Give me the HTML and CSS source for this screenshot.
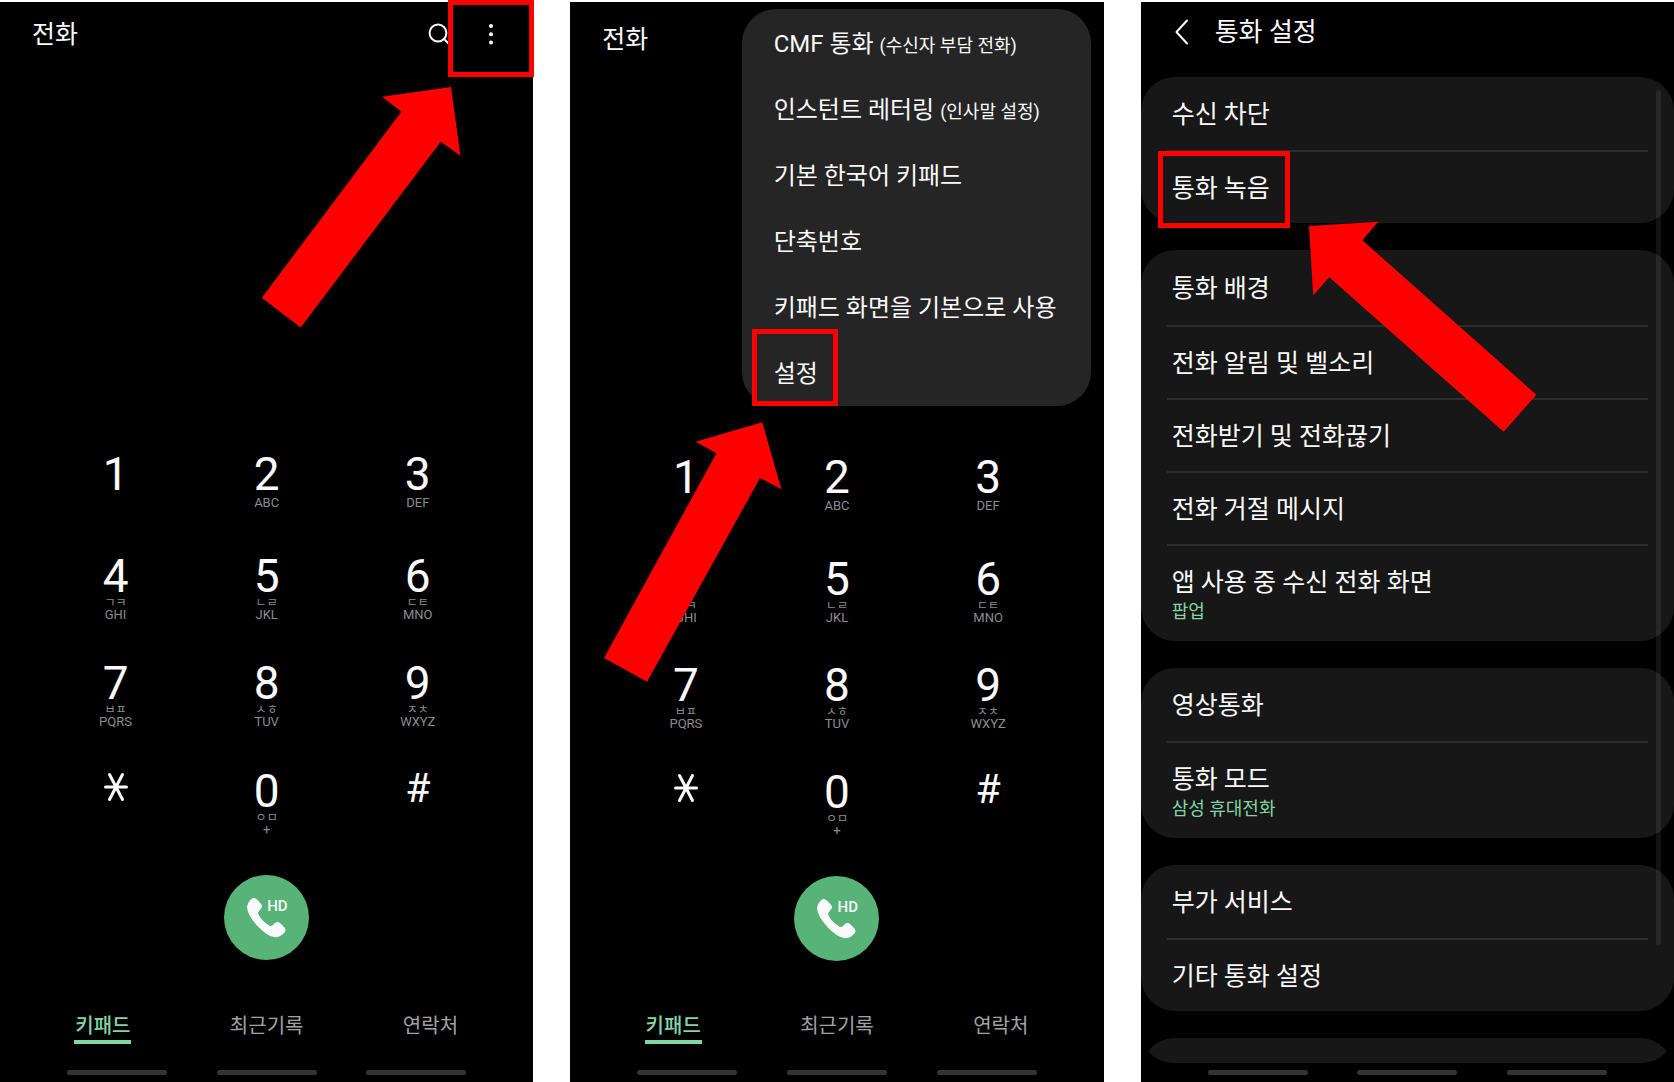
FILE: index.html
```
<!DOCTYPE html>
<html lang="ko">
<head>
    <meta charset="UTF-8">
    <meta name="viewport" content="width=device-width, initial-scale=1.0">
    <title>통화 녹음 설정 방법</title>
    <link rel="stylesheet" href="styles.css">
</head>
<body>
<main class="screens">

    <!-- 1. 전화 앱 키패드 -->
    <section class="phone">
        <header class="phone-header">
            <h1 class="phone-title">전화</h1>
            <div class="header-actions">
                <button class="icon-btn" aria-label="검색">
                    <svg width="24" height="24" viewBox="0 0 24 24"><circle cx="11" cy="10" r="8.4"/><path d="M17 16l5 5"/></svg>
                </button>
                <button class="icon-btn" aria-label="더보기">
                    <svg class="dots" width="24" height="24" viewBox="0 0 24 24"><circle cx="12" cy="3" r="2"/><circle cx="12" cy="11.2" r="2"/><circle cx="12" cy="19.4" r="2"/></svg>
                </button>
            </div>
        </header>

        <div class="keypad">
            <button class="key"><span class="digit">1</span></button>
            <button class="key"><span class="digit">2</span><span class="latin">ABC</span></button>
            <button class="key"><span class="digit">3</span><span class="latin">DEF</span></button>
            <button class="key"><span class="digit">4</span><span class="jamo">ㄱㅋ</span><span class="latin">GHI</span></button>
            <button class="key"><span class="digit">5</span><span class="jamo">ㄴㄹ</span><span class="latin">JKL</span></button>
            <button class="key"><span class="digit">6</span><span class="jamo">ㄷㅌ</span><span class="latin">MNO</span></button>
            <button class="key"><span class="digit">7</span><span class="jamo">ㅂㅍ</span><span class="latin">PQRS</span></button>
            <button class="key"><span class="digit">8</span><span class="jamo">ㅅㅎ</span><span class="latin">TUV</span></button>
            <button class="key"><span class="digit">9</span><span class="jamo">ㅈㅊ</span><span class="latin">WXYZ</span></button>
            <button class="key" aria-label="별표"><svg class="star" width="24" height="30" viewBox="0 0 24 30"><path d="M1.5 15h21M5.5 2.5l13 25M18.5 2.5l-13 25"/></svg></button>
            <button class="key"><span class="digit">0</span><span class="jamo">ㅇㅁ</span><span class="latin">+</span></button>
            <button class="key"><span class="symbol">#</span></button>
        </div>

        <button class="call-btn" aria-label="HD 통화">
            <svg width="85" height="85" viewBox="0 0 85 85"><path d="M28.5 23.2Q31 22 34 25.5L37 29Q39 31 37 33.5Q34 36.5 34 38Q37 46 46 51Q48 51.5 50.5 48.5Q53.5 46 56 48L60.5 52.5Q62.5 55 60.5 57.5Q56 62.5 51 62.3Q43 61.5 33 50.5Q23.5 40 23 32Q24 26 28.5 23.2Z"/></svg>
            <span class="hd">HD</span>
        </button>

        <nav class="tabs">
            <button class="tab active">키패드</button>
            <button class="tab">최근기록</button>
            <button class="tab">연락처</button>
        </nav>
        <div class="gesture-bar"><i></i><i></i><i></i></div>

        <span class="highlight highlight-more"></span>
        <svg class="arrow arrow-more" width="200" height="242" viewBox="0 0 200 242"><path d="M190 1L199.4 69.7L179.7 55.7L39.7 241.5L.8 211.8L140.4 25.7L121.1 10.7Z"/></svg>
    </section>

    <!-- 2. 더보기 메뉴 -->
    <section class="phone phone-menu">
        <header class="phone-header">
            <h1 class="phone-title">전화</h1>
        </header>

        <div class="keypad">
            <button class="key"><span class="digit">1</span></button>
            <button class="key"><span class="digit">2</span><span class="latin">ABC</span></button>
            <button class="key"><span class="digit">3</span><span class="latin">DEF</span></button>
            <button class="key"><span class="digit">4</span><span class="jamo">ㄱㅋ</span><span class="latin">GHI</span></button>
            <button class="key"><span class="digit">5</span><span class="jamo">ㄴㄹ</span><span class="latin">JKL</span></button>
            <button class="key"><span class="digit">6</span><span class="jamo">ㄷㅌ</span><span class="latin">MNO</span></button>
            <button class="key"><span class="digit">7</span><span class="jamo">ㅂㅍ</span><span class="latin">PQRS</span></button>
            <button class="key"><span class="digit">8</span><span class="jamo">ㅅㅎ</span><span class="latin">TUV</span></button>
            <button class="key"><span class="digit">9</span><span class="jamo">ㅈㅊ</span><span class="latin">WXYZ</span></button>
            <button class="key" aria-label="별표"><svg class="star" width="24" height="30" viewBox="0 0 24 30"><path d="M1.5 15h21M5.5 2.5l13 25M18.5 2.5l-13 25"/></svg></button>
            <button class="key"><span class="digit">0</span><span class="jamo">ㅇㅁ</span><span class="latin">+</span></button>
            <button class="key"><span class="symbol">#</span></button>
        </div>

        <button class="call-btn" aria-label="HD 통화">
            <svg width="85" height="85" viewBox="0 0 85 85"><path d="M28.5 23.2Q31 22 34 25.5L37 29Q39 31 37 33.5Q34 36.5 34 38Q37 46 46 51Q48 51.5 50.5 48.5Q53.5 46 56 48L60.5 52.5Q62.5 55 60.5 57.5Q56 62.5 51 62.3Q43 61.5 33 50.5Q23.5 40 23 32Q24 26 28.5 23.2Z"/></svg>
            <span class="hd">HD</span>
        </button>

        <nav class="tabs">
            <button class="tab active">키패드</button>
            <button class="tab">최근기록</button>
            <button class="tab">연락처</button>
        </nav>
        <div class="gesture-bar"><i></i><i></i><i></i></div>

        <div class="popup">
            <button class="popup-item">CMF 통화 <small>(수신자 부담 전화)</small></button>
            <button class="popup-item">인스턴트 레터링 <small>(인사말 설정)</small></button>
            <button class="popup-item">기본 한국어 키패드</button>
            <button class="popup-item">단축번호</button>
            <button class="popup-item">키패드 화면을 기본으로 사용</button>
            <button class="popup-item">설정</button>
        </div>

        <span class="highlight highlight-settings"></span>
        <svg class="arrow arrow-settings" width="180" height="262" viewBox="0 0 180 262"><path d="M159.2 1.3L178.4 68.3L157 57L44.1 260.7L1 237L113.4 32.3L92.7 20.7Z"/></svg>
    </section>

    <!-- 3. 통화 설정 -->
    <section class="phone">
        <header class="phone-header settings-header">
            <button class="icon-btn" aria-label="뒤로">
                <svg width="14" height="26" viewBox="0 0 14 26"><path d="M12 1.5L1.5 13L12 24.5"/></svg>
            </button>
            <h1 class="phone-title">통화 설정</h1>
        </header>

        <div class="settings">
            <div class="card">
                <button class="row">수신 차단</button>
                <button class="row">통화 녹음</button>
            </div>
            <div class="card card-call">
                <button class="row">통화 배경</button>
                <button class="row">전화 알림 및 벨소리</button>
                <button class="row">전화받기 및 전화끊기</button>
                <button class="row">전화 거절 메시지</button>
                <button class="row row-double">앱 사용 중 수신 전화 화면<span class="value">팝업</span></button>
            </div>
            <div class="card">
                <button class="row">영상통화</button>
                <button class="row row-double">통화 모드<span class="value">삼성 휴대전화</span></button>
            </div>
            <div class="card">
                <button class="row">부가 서비스</button>
                <button class="row">기타 통화 설정</button>
            </div>
            <div class="card card-cut"></div>
            <span class="scrollbar"></span>
        </div>
        <div class="gesture-bar"><i></i><i></i><i></i></div>

        <span class="highlight highlight-record"></span>
        <svg class="arrow arrow-record" width="230" height="212" viewBox="0 0 230 212"><path d="M1 5L70.2 .7L54.4 19.3L228.4 173.7L195.6 210.7L21.3 56.3L5.2 74.3Z"/></svg>
    </section>

</main>
</body>
</html>
```

FILE: styles.css
```
:root {
    --green: #83d5a8;
    --call: #57b377;
    --card: #171717;
    --popup: #252525;
    --line: #2d2d2d;
    --muted: #8c8c8c;
    --mark: #ff0000;
}

* {
    box-sizing: border-box;
}

body {
    margin: 0;
    background: #fff;
    color: #fafafa;
    font-family: Roboto, "Noto Sans CJK KR", sans-serif;
}

button {
    margin: 0;
    padding: 0;
    border: 0;
    background: none;
    color: inherit;
    font: inherit;
    cursor: pointer;
}

.screens {
    display: grid;
    grid-template-columns: repeat(3, 1fr);
    gap: 37px;
    min-height: 100vh;
    padding-top: 2px;
}

.phone {
    position: relative;
    display: flex;
    flex-direction: column;
    padding-bottom: 7px;
    background: #000;
}

/* 상단 */
.phone-header {
    display: flex;
    align-items: center;
    justify-content: space-between;
    height: 65px;
    padding: 0 30px 0 32px;
}

.phone-title {
    margin: 0;
    font-size: 25px;
    font-weight: 400;
    line-height: 30px;
}

.header-actions {
    display: flex;
    gap: 28px;
}

.icon-btn {
    display: flex;
}

.icon-btn svg {
    fill: none;
    stroke: #fafafa;
    stroke-width: 2;
    stroke-linecap: round;
    stroke-linejoin: round;
}

.icon-btn .dots {
    fill: #fafafa;
    stroke: none;
}

.phone-menu .phone-header {
    height: 76px;
}

/* 키패드 */
.keypad {
    display: grid;
    grid-template-columns: repeat(3, 1fr);
    grid-template-rows: 102px 107px 108px 106px;
    margin-top: auto;
    padding: 0 40px;
}

.phone-menu .keypad {
    grid-template-rows: 102px 106px 107px 106px;
}

.key {
    display: flex;
    flex-direction: column;
    align-items: center;
    justify-content: flex-start;
}

.digit {
    font-size: 46px;
    line-height: 44px;
}

.symbol {
    font-size: 41px;
    line-height: 38px;
}

.star {
    margin-top: 3px;
    fill: none;
    stroke: #fafafa;
    stroke-width: 3;
    stroke-linecap: round;
}

.jamo {
    color: var(--muted);
    font-size: 12px;
    line-height: 10px;
}

.latin {
    color: var(--muted);
    font-size: 13px;
    line-height: 14px;
}

.call-btn {
    position: relative;
    align-self: center;
    width: 85px;
    height: 85px;
    border-radius: 50%;
    background: var(--call);
}

.call-btn svg {
    display: block;
    fill: #fafafa;
}

.hd {
    position: absolute;
    top: 22px;
    left: 43px;
    font-size: 15px;
    font-weight: 500;
    line-height: 18px;
}

/* 하단 탭 */
.tabs {
    display: grid;
    grid-template-columns: repeat(3, 1fr);
    justify-items: center;
    margin-top: 53px;
    padding: 0 21px;
}

.phone-menu .tabs {
    margin-top: 52px;
}

.tab {
    padding: 0 1px 1px;
    border-bottom: 4px solid transparent;
    color: #a3a3a3;
    font-size: 20px;
    line-height: 26px;
}

.tab.active {
    border-color: var(--green);
    color: var(--green);
    font-weight: 500;
}

.gesture-bar {
    display: grid;
    grid-template-columns: repeat(3, 1fr);
    justify-items: center;
    margin-top: 26px;
    padding: 0 42px;
}

.gesture-bar i {
    width: 100px;
    height: 5px;
    border-radius: 3px;
    background: #333;
}

/* 더보기 메뉴 */
.popup {
    position: absolute;
    top: 7px;
    right: 13px;
    width: 349px;
    height: 397px;
    padding-top: 2px;
    border-radius: 34px;
    background: var(--popup);
}

.popup-item {
    display: block;
    width: 100%;
    height: 66px;
    padding: 0 32px;
    font-size: 24px;
    line-height: 66px;
    text-align: left;
    white-space: nowrap;
}

.popup-item small {
    font-size: 18px;
}

/* 통화 설정 */
.settings-header {
    justify-content: flex-start;
    gap: 26px;
    height: 75px;
    padding: 0 34px 16px;
}

.settings-header .phone-title {
    font-size: 26px;
}

.settings {
    position: relative;
    display: flex;
    flex-direction: column;
    gap: 27px;
    overflow: hidden;
    border-radius: 0 0 32px 32px;
}

.settings + .gesture-bar {
    margin-top: auto;
}

.card {
    padding: 0 26px;
    border-radius: 34px;
    background: var(--card);
}

/* 목록 아래쪽에서 잘리는 카드 */
.card-cut {
    height: 68px;
    margin-bottom: -43px;
}

.row {
    display: block;
    width: 100%;
    height: 73px;
    padding: 2px 5px 0;
    font-size: 25px;
    line-height: 30px;
    text-align: left;
}

.row + .row {
    border-top: 2px solid var(--line);
}

.card-call .row:first-child {
    height: 75px;
}

.row-double {
    height: 97px;
}

.value {
    display: block;
    margin-top: 4px;
    color: var(--green);
    font-size: 18px;
    line-height: 20px;
}

.scrollbar {
    position: absolute;
    top: 13px;
    right: 13px;
    width: 5px;
    height: 855px;
    border-radius: 3px;
    background: rgba(255, 255, 255, 0.07);
}

/* 안내 표시 */
.highlight {
    position: absolute;
    border: 5px solid var(--mark);
}

.highlight-more {
    top: -2px;
    right: -1px;
    width: 86px;
    height: 77px;
}

.highlight-settings {
    top: 327px;
    left: 182px;
    width: 86px;
    height: 77px;
}

.highlight-record {
    top: 149px;
    left: 17px;
    width: 132px;
    height: 77px;
}

.arrow {
    position: absolute;
    fill: var(--mark);
}

.arrow-more {
    top: 84px;
    left: 261px;
}

.arrow-settings {
    top: 419px;
    left: 33px;
}

.arrow-record {
    top: 219px;
    left: 167px;
}
```
